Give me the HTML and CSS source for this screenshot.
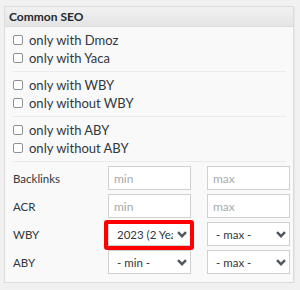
FILE: index.html
```html
<!DOCTYPE html>
<html>
<head>
<meta charset="utf-8">
<link rel="stylesheet" href="styles.css">
</head>
<body>
<div class="panel">
  <div class="panel-head">Common SEO</div>
  <div class="panel-body">
    <div class="group">
      <label class="check"><input type="checkbox"><span>only with Dmoz</span></label>
      <label class="check"><input type="checkbox"><span>only with Yaca</span></label>
    </div>
    <div class="sep"></div>
    <div class="group">
      <label class="check"><input type="checkbox"><span>only with WBY</span></label>
      <label class="check"><input type="checkbox"><span>only without WBY</span></label>
    </div>
    <div class="sep"></div>
    <div class="group">
      <label class="check"><input type="checkbox"><span>only with ABY</span></label>
      <label class="check"><input type="checkbox"><span>only without ABY</span></label>
    </div>
    <div class="sep"></div>
    <div class="fields">
      <span class="lbl">Backlinks</span>
      <input class="txt" type="text" placeholder="min">
      <input class="txt" type="text" placeholder="max">

      <span class="lbl">ACR</span>
      <input class="txt" type="text" placeholder="min">
      <input class="txt" type="text" placeholder="max">

      <span class="lbl">WBY</span>
      <div class="sel highlight">
        <select><option>2023 (2 Years)</option></select>
        <svg class="chev" width="10" height="7" viewBox="0 0 10 7"><path d="M1 1.2 L5 5.2 L9 1.2" fill="none" stroke="#50575e" stroke-width="2.4"/></svg>
      </div>
      <div class="sel">
        <select><option>- max -</option></select>
        <svg class="chev" width="10" height="7" viewBox="0 0 10 7"><path d="M1 1.2 L5 5.2 L9 1.2" fill="none" stroke="#50575e" stroke-width="2.4"/></svg>
      </div>

      <span class="lbl">ABY</span>
      <div class="sel">
        <select><option>- min -</option></select>
        <svg class="chev" width="10" height="7" viewBox="0 0 10 7"><path d="M1 1.2 L5 5.2 L9 1.2" fill="none" stroke="#50575e" stroke-width="2.4"/></svg>
      </div>
      <div class="sel">
        <select><option>- max -</option></select>
        <svg class="chev" width="10" height="7" viewBox="0 0 10 7"><path d="M1 1.2 L5 5.2 L9 1.2" fill="none" stroke="#50575e" stroke-width="2.4"/></svg>
      </div>
    </div>
  </div>
</div>
</body>
</html>
```

FILE: styles.css
```css
html, body {
  margin: 0;
  padding: 0;
  background: #f1f1f1;
}
body {
  font-family: Lato, "Open Sans", sans-serif;
  color: #32373c;
}
.panel {
  margin: 6px 0 0 4px;
  width: 290px;
  box-sizing: border-box;
  border: 1px solid #dcdcdc;
  background: #f9f9f9;
  box-shadow: 1px 1px 0 rgba(0,0,0,0.04);
}
.panel-head {
  height: 19px;
  line-height: 19px;
  padding-left: 4px;
  font-size: 12px;
  font-weight: 700;
  color: #23282d;
  background: linear-gradient(#f1f1f1, #e4e4e4);
  border-bottom: 1px solid #dcdcdc;
}
.panel-body {
  padding: 0 2px 8px 8px;
}
.group {
  padding: 4px 0;
}
.check {
  display: flex;
  align-items: center;
  height: 18px;
  font-size: 13px;
  color: #32373c;
}
.check input {
  appearance: none;
  -webkit-appearance: none;
  margin: 0 6px 0 0;
  width: 10px;
  height: 10px;
  box-sizing: border-box;
  border: 1px solid #8c8f94;
  border-radius: 2px;
  background: #fff;
}
.sep {
  height: 1px;
  background: #ebebeb;
  margin-right: 5px;
}
.fields {
  padding-top: 4px;
  display: grid;
  grid-template-columns: 79px 83px 83px;
  column-gap: 16px;
  row-gap: 4px;
  grid-auto-rows: 24px;
  align-items: center;
}
.lbl {
  font-size: 11.5px;
  color: #32373c;
}
.txt {
  box-sizing: border-box;
  width: 83px;
  height: 24px;
  margin: 0;
  border: 1px solid #d0d0d0;
  background: #fff;
  padding: 0 5px;
  font-family: inherit;
  font-size: 12px;
  color: #32373c;
  outline: none;
}
.txt::placeholder {
  color: #a7aaad;
}
.sel {
  position: relative;
  width: 83px;
  height: 24px;
}
.sel select {
  appearance: none;
  -webkit-appearance: none;
  box-sizing: border-box;
  width: 83px;
  height: 24px;
  margin: 0;
  border: 1px solid #d0d0d0;
  border-radius: 0;
  background: #fff;
  padding: 0 17px 0 8px;
  font-family: inherit;
  font-size: 11.5px;
  color: #32373c;
}
.chev {
  position: absolute;
  right: 4px;
  top: 9px;
  pointer-events: none;
}
.highlight::after {
  content: "";
  position: absolute;
  left: -4px;
  top: -2px;
  width: 90px;
  height: 30px;
  box-sizing: border-box;
  border: 4px solid #ff0000;
  border-radius: 3px;
  pointer-events: none;
}
```
